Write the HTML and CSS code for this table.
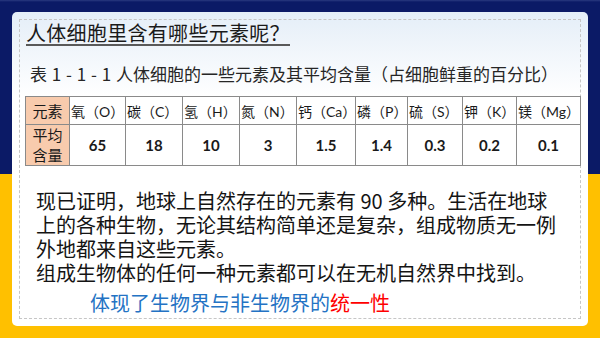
FILE: index.html
```html
<!DOCTYPE html>
<html lang="zh">
<head>
<meta charset="utf-8">
<link rel="stylesheet" href="styles.css">
</head>
<body>
<div class="slide">
  <div class="card">
    <div class="inner">
      <h1 class="title"><span>人体细胞里含有哪些元素呢？</span></h1>
      <p class="caption">表 1 - 1 - 1 人体细胞的一些元素及其平均含量（占细胞鲜重的百分比）</p>
      <table class="elements">
        <colgroup>
          <col class="c44"><col class="c56"><col class="c57"><col class="c57"><col class="c57"><col class="c59"><col class="c52"><col class="c55"><col class="c54"><col class="c64">
        </colgroup>
        <tr class="head">
          <th class="label">元素</th>
          <td>氧（O）</td>
          <td>碳（C）</td>
          <td>氢（H）</td>
          <td>氮（N）</td>
          <td>钙（Ca）</td>
          <td>磷（P）</td>
          <td>硫（S）</td>
          <td>钾（K）</td>
          <td>镁（Mg）</td>
        </tr>
        <tr class="vals">
          <th class="label">平均<br>含量</th>
          <td>65</td>
          <td>18</td>
          <td>10</td>
          <td>3</td>
          <td>1.5</td>
          <td>1.4</td>
          <td>0.3</td>
          <td>0.2</td>
          <td>0.1</td>
        </tr>
      </table>
      <p class="body">现已证明，地球上自然存在的元素有 90 多种。生活在地球上的各种生物，无论其结构简单还是复杂，组成物质无一例外地都来自这些元素。
组成生物体的任何一种元素都可以在无机自然界中找到。</p>
      <p class="conclusion">体现了生物界与非生物界的<span class="red">统一性</span></p>
    </div>
  </div>
</div>
</body>
</html>
```

FILE: styles.css
```css
* { box-sizing: border-box; }
html, body { margin: 0; padding: 0; }
body {
  width: 600px;
  height: 338px;
  overflow: hidden;
  font-family: "Noto Sans CJK SC", "Noto Sans", sans-serif;
}
.slide {
  width: 600px;
  height: 338px;
  padding: 12px;
  background: linear-gradient(to bottom, #2a3a80 0, #0b1a66 2px, #0b1a66 174px, #ffc000 174px, #ffc000 100%);
}
.card {
  height: 314px;
  border-radius: 5px;
  padding: 7px;
  background: linear-gradient(to bottom, #e4eef8 0, #eef4fa 30px, #ffffff 85px);
}
.inner {
  height: 300px;
  border: 1px dashed #c6c6c6;
  padding: 3px 0 0 5px;
}
.title {
  margin: 0 0 0 1px;
  font-size: 20px;
  font-weight: normal;
  line-height: 20px;
  color: #1a1a1a;
  letter-spacing: 0.3px;
}
.title span {
  display: inline-block;
  padding-bottom: 1px;
  border-bottom: 2px solid #595959;
}
.caption {
  margin: 17px 0 0 5px;
  font-size: 17px;
  line-height: 21px;
  color: #262626;
  word-spacing: 1px;
}
.elements {
  margin-top: 12px;
  border-collapse: collapse;
  table-layout: fixed;
  width: 555px;
  background: #ffffff;
}
.c44 { width: 44px; }
.c52 { width: 52px; }
.c54 { width: 54px; }
.c55 { width: 55px; }
.c56 { width: 56px; }
.c57 { width: 57px; }
.c59 { width: 59px; }
.c64 { width: 64px; }
.elements th, .elements td {
  border: 1px solid #8a8a8a;
  padding: 0;
  white-space: nowrap;
  overflow: hidden;
}
.elements .label {
  background: #f8cbad;
  font-weight: normal;
  font-size: 15px;
  line-height: 20px;
  color: #1a1a1a;
  text-align: center;
}
.head { height: 28px; }
.head td {
  font-family: Lato, "Noto Sans CJK SC", sans-serif;
  font-size: 14px;
  color: #1a1a1a;
  padding-left: 1px;
  text-align: left;
}
.vals { height: 41px; }
.vals td {
  font-family: Lato, "Noto Sans", sans-serif;
  font-weight: bold;
  font-size: 15px;
  color: #1a1a1a;
  text-align: center;
}
.body {
  margin: 23px 0 0 11px;
  width: 530px;
  font-size: 20px;
  line-height: 24px;
  color: #141414;
  white-space: pre-line;
}
.conclusion {
  margin: 6px 0 0 65px;
  font-size: 20px;
  line-height: 24px;
  color: #2473c4;
}
.red { color: #ff0000; }
```
